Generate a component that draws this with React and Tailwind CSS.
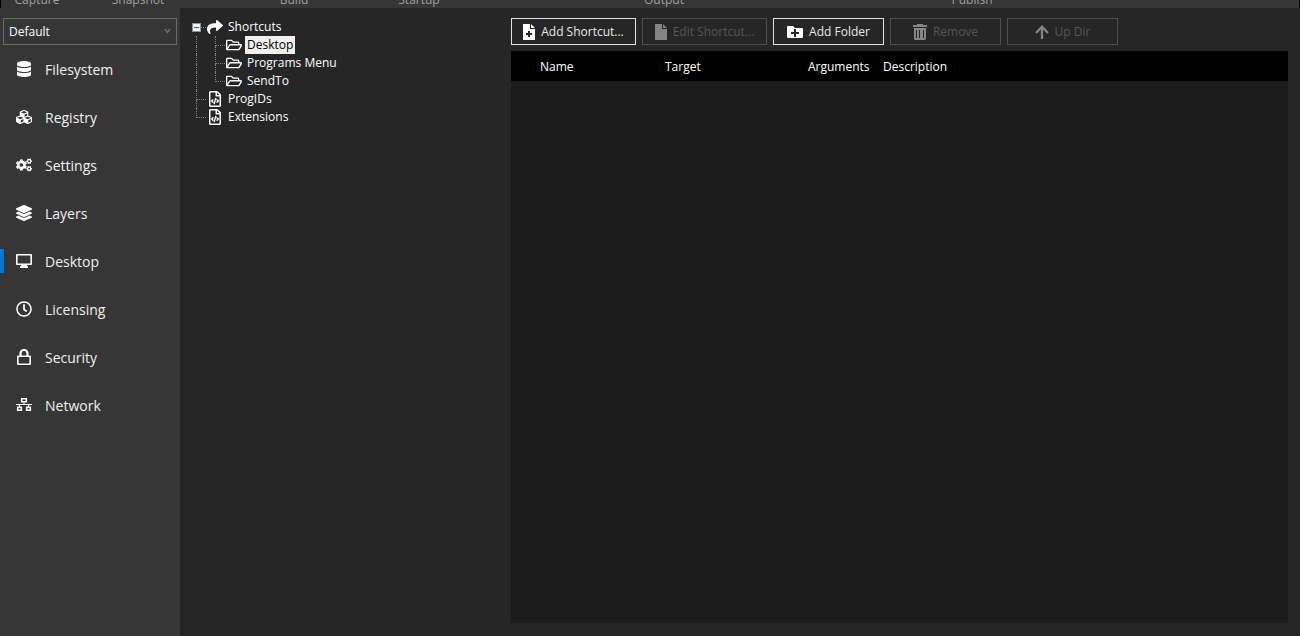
import { FaDatabase, FaCubes, FaCogs, FaLayerGroup, FaRegClock, FaShare, FaRegFolderOpen, FaRegFileCode } from 'react-icons/fa';

const MonitorIcon = () => (
  <svg viewBox="0 0 16 16" width="16" height="16" fill="currentColor">
    <path fillRule="evenodd" d="M1 1h14a1 1 0 0 1 1 1v9a1 1 0 0 1-1 1h-4v1h1v2H4v-2h1v-1H1a1 1 0 0 1-1-1V2a1 1 0 0 1 1-1zm.6 1.600v7.800h12.800V2.600z" />
  </svg>
);

const LockIcon = () => (
  <svg viewBox="0 0 16 16" width="16" height="16" fill="none" stroke="currentColor">
    <rect x="1.800" y="7.300" width="12.400" height="7.900" rx="0.500" strokeWidth="1.600" />
    <path d="M4.500 7V4.500a3.500 3.500 0 0 1 7 0V7" strokeWidth="2.200" />
  </svg>
);

const NetworkIcon = () => (
  <svg viewBox="0 0 16 16" width="16" height="16" fill="none" stroke="currentColor" strokeWidth="1.600">
    <path d="M5.700 1.800h4.600v2.900H5.700zM1.700 10.300h3.600v2.900H1.700zM10.700 10.300h3.600v2.900h-3.600z" />
    <path d="M0 7.500h16M8 5v2.500M3.500 7.500v3M12.500 7.500v3" strokeWidth="1.200" />
  </svg>
);

const FileIcon = () => (
  <svg viewBox="0 0 12 16" width="12" height="16" fill="currentColor">
    <path d="M0 0h7v5h5v11H0zM8 0l4 4H8z" />
  </svg>
);

const FileAddIcon = () => (
  <svg viewBox="0 0 12 16" width="12" height="16" fill="currentColor">
    <path fillRule="evenodd" d="M0 0h7v5h5v11H0zM5 7v2H3v2h2v2h2v-2h2V9H7V7z" />
    <path d="M8 0l4 4H8z" />
  </svg>
);

const FolderAddIcon = () => (
  <svg viewBox="0 0 16 12" width="16" height="12" fill="currentColor">
    <path fillRule="evenodd" d="M0 1a1 1 0 0 1 1-1h5l2 2h7a1 1 0 0 1 1 1v8a1 1 0 0 1-1 1H1a1 1 0 0 1-1-1zM7 3v3H4v2h3v3h2V8h3V6H9V3z" />
  </svg>
);

const TrashIcon = () => (
  <svg viewBox="0 0 14 16" width="14" height="16" fill="currentColor">
    <path d="M0 1h4V0h6v1h4v2H0z" />
    <path fillRule="evenodd" d="M1 4h12v10.500a1.500 1.500 0 0 1-1.500 1.500h-9A1.500 1.500 0 0 1 1 14.500zM3 6v8h1V6zM6 6v8h1V6zM10 6v8h1V6z" />
  </svg>
);

const ArrowUpIcon = () => (
  <svg viewBox="0 0 14 14" width="14" height="14" fill="none" stroke="currentColor" strokeWidth="2.200">
    <path d="M7 14V1.500M1 8l6-6.300L13 8" />
  </svg>
);

const tabs = [
  { label: 'Capture', width: 'w-[72px]' },
  { label: 'Snapshot', width: 'w-[130px]' },
  { label: 'Build', width: 'w-[182px]' },
  { label: 'Startup', width: 'w-[68px]' },
  { label: 'Output', width: 'w-[422px]' },
  { label: 'Publish', width: 'w-[194px]' },
];

const navItems = [
  { label: 'Filesystem', icon: <FaDatabase size={16} /> },
  { label: 'Registry', icon: <FaCubes size={16} /> },
  { label: 'Settings', icon: <FaCogs size={16} /> },
  { label: 'Layers', icon: <FaLayerGroup size={16} /> },
  { label: 'Desktop', icon: <MonitorIcon />, active: true },
  { label: 'Licensing', icon: <FaRegClock size={16} /> },
  { label: 'Security', icon: <LockIcon /> },
  { label: 'Network', icon: <NetworkIcon /> },
];

// guides: one entry per indent column
const treeRows = [
  { label: 'Shortcuts', icon: <FaShare size={16} />, guides: ['expander'] },
  { label: 'Desktop', icon: <FaRegFolderOpen size={16} />, guides: ['line', 'branch'], selected: true },
  { label: 'Programs Menu', icon: <FaRegFolderOpen size={16} />, guides: ['line', 'branch'] },
  { label: 'SendTo', icon: <FaRegFolderOpen size={16} />, guides: ['line', 'last'] },
  { label: 'ProgIDs', icon: <FaRegFileCode size={16} />, guides: ['branch'] },
  { label: 'Extensions', icon: <FaRegFileCode size={16} />, guides: ['last'] },
];

const actions = [
  { label: 'Add Shortcut...', icon: <FileAddIcon />, width: 'w-[125px]' },
  { label: 'Edit Shortcut...', icon: <FileIcon />, width: 'w-[125px]', disabled: true },
  { label: 'Add Folder', icon: <FolderAddIcon />, width: 'w-[111px]' },
  { label: 'Remove', icon: <TrashIcon />, width: 'w-[111px]', disabled: true },
  { label: 'Up Dir', icon: <ArrowUpIcon />, width: 'w-[111px]', disabled: true },
];

function TreeGuide({ type }) {
  if (type === 'expander') {
    return (
      <span className="flex w-[19px] h-full items-center pl-[5px]">
        <button type="button" aria-label="Collapse Shortcuts" className="flex items-center justify-center w-[9px] h-[9px] bg-[#f0f0f0] border border-[#919191]">
          <span className="w-[5px] h-px bg-[#3c5aa8]" />
        </button>
        <span className="flex-1 border-t border-dotted border-[#808080]" />
      </span>
    );
  }
  return (
    <span className="flex flex-col w-[19px] h-full pl-[9px]">
      <span className={`h-[10px] border-l border-dotted border-[#808080] ${type === 'line' ? '' : 'border-b'}`} />
      <span className={`flex-1 border-dotted border-[#808080] ${type === 'last' ? '' : 'border-l'}`} />
    </span>
  );
}

function Sidebar() {
  return (
    <aside className="w-[180px] shrink-0 bg-[#363636] pt-[10px]">
      <div className="relative mx-[3px]">
        <select aria-label="Layer" className="block w-full h-[27px] appearance-none border border-[#6a6a6a] bg-[#363636] px-[5px] text-[12px] text-white outline-none">
          <option>Default</option>
        </select>
        <svg className="absolute right-[6px] top-[10px] pointer-events-none" viewBox="0 0 7 6" width="7" height="6" fill="none" stroke="#6a6a6a" strokeWidth="1.500">
          <path d="M1 1l2.500 3.500L6 1" />
        </svg>
      </div>
      <nav>
        {navItems.map((item) => (
          <a key={item.label} href="#" className="flex items-center h-12 text-[#f0f0f0]">
            <span className={`w-1 h-6 ${item.active ? 'bg-[#0078d7]' : ''}`} />
            <span className="flex justify-center w-4 ml-3 text-white">{item.icon}</span>
            <span className="ml-[13px] text-[14px]">{item.label}</span>
          </a>
        ))}
      </nav>
    </aside>
  );
}

function Tree() {
  return (
    <ul className="w-[331px] shrink-0 pl-[7px] pt-[10px] text-[12px] text-white">
      {treeRows.map((row) => (
        <li key={row.label} className="flex items-center h-[18px]">
          {row.guides.map((type, i) => (
            <TreeGuide key={i} type={type} />
          ))}
          <span className="flex justify-center w-[18px]">{row.icon}</span>
          <span className={`ml-[2px] px-[2px] leading-[18px] ${row.selected ? 'bg-[#f0f0f0] text-black' : ''}`}>{row.label}</span>
        </li>
      ))}
    </ul>
  );
}

function ShortcutPanel() {
  return (
    <main className="flex flex-col flex-1 min-w-0 pt-[10px] pr-3 pb-[13px]">
      <div className="flex gap-[6px]">
        {actions.map((a) => (
          <button
            key={a.label}
            type="button"
            disabled={a.disabled}
            className={`flex items-center justify-center gap-[6px] h-[27px] border text-[12px] whitespace-nowrap ${a.width} ${a.disabled ? 'border-[#4d4d4d] text-[#555555]' : 'border-[#e0e0e0] text-[#e8e8e8]'}`}
          >
            <span className={a.disabled ? 'text-[#858585]' : 'text-white'}>{a.icon}</span>
            {a.label}
          </button>
        ))}
      </div>
      <div className="flex-1 mt-[6px] bg-[#1c1c1c]">
        <table className="w-full table-fixed text-left text-[12px] text-white">
          <thead className="bg-black">
            <tr className="h-[30px]">
              <td className="w-[29px]" />
              <th className="w-[125px] pt-[2px] font-normal">Name</th>
              <th className="w-[143px] pt-[2px] font-normal">Target</th>
              <th className="w-[75px] pt-[2px] font-normal">Arguments</th>
              <th className="pt-[2px] font-normal">Description</th>
            </tr>
          </thead>
        </table>
      </div>
    </main>
  );
}

export default function App() {
  return (
    <div className="flex flex-col min-h-screen bg-[#262626] font-['Open_Sans','Noto_Sans',sans-serif]">
      <header className="flex items-end h-2 overflow-hidden border-x border-black bg-[#363636] text-[12px] leading-4 text-[#a0a0a0]">
        {tabs.map((tab) => (
          <a key={tab.label} href="#" className={`text-center ${tab.width}`}>{tab.label}</a>
        ))}
      </header>
      <div className="flex flex-1">
        <Sidebar />
        <Tree />
        <ShortcutPanel />
      </div>
    </div>
  );
}
